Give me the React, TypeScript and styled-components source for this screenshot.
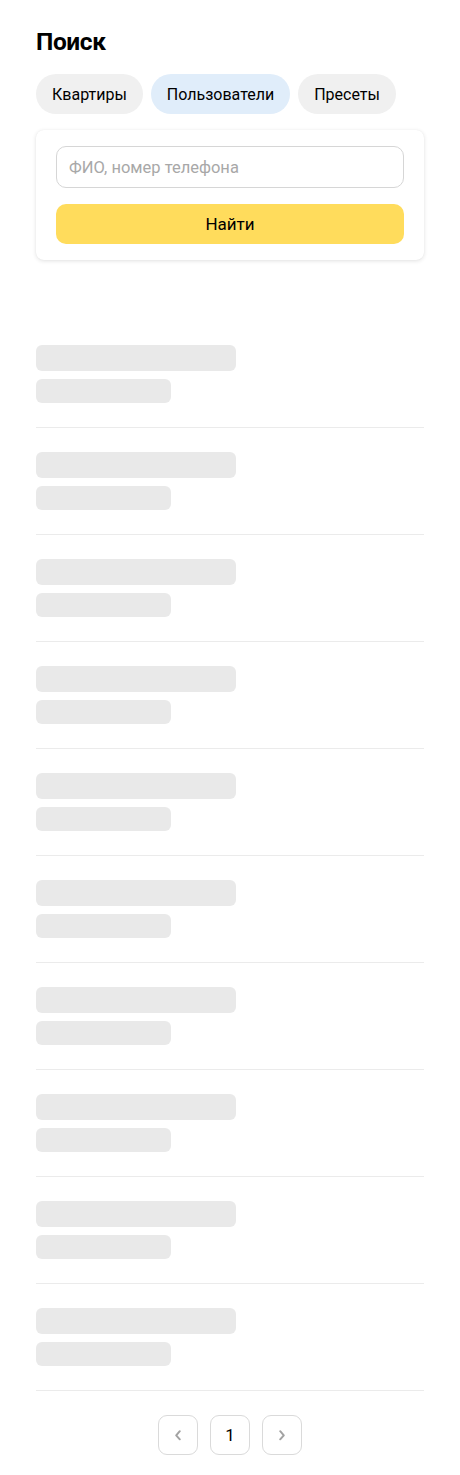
import React from "react";
import styled, { createGlobalStyle } from "styled-components";

const Global = createGlobalStyle`
  html, body { margin: 0; padding: 0; background: #fff; }
  body { font-family: Roboto, "Noto Sans", Arial, sans-serif; color: #000; }
  * { box-sizing: border-box; }
`;

const Page = styled.div`
  width: 460px;
  padding: 24px 36px 20px;
  display: flex;
  flex-direction: column;
`;

const Title = styled.h1`
  margin: 0;
  font-size: 24.5px;
  line-height: 36px;
  font-weight: 700;
  letter-spacing: -0.4px;
`;

const Tabs = styled.div`
  display: flex;
  gap: 8px;
  margin-top: 14px;
`;

const Tab = styled.button<{ $active?: boolean }>`
  height: 40px;
  padding: 0 16px;
  border: none;
  border-radius: 20px;
  background: ${(p) => (p.$active ? "#e0edfa" : "#f0f0f0")};
  font-family: inherit;
  font-size: 16px;
  color: #000;
  cursor: pointer;
`;

const Card = styled.div`
  margin-top: 16px;
  background: #fff;
  border-radius: 8px;
  box-shadow: 0 1px 4px rgba(0, 0, 0, 0.12), 0 0 1px rgba(0, 0, 0, 0.06);
  padding: 16px 20px;
  display: flex;
  flex-direction: column;
  gap: 16px;
`;

const Input = styled.input`
  height: 42px;
  border: 1px solid #d6d6d6;
  border-radius: 10px;
  padding: 0 12px;
  font-family: inherit;
  font-size: 16.5px;
  outline: none;
  &::placeholder { color: #a8a8a8; }
`;

const SearchButton = styled.button`
  height: 40px;
  border: none;
  border-radius: 10px;
  background: #ffdc5c;
  font-family: inherit;
  font-size: 17px;
  color: #000;
`;

const List = styled.div`
  margin-top: 61px;
  display: flex;
  flex-direction: column;
`;

const Item = styled.div`
  padding: 24px 0;
  border-bottom: 1px solid #ebebeb;
  display: flex;
  flex-direction: column;
  gap: 8px;
`;

const Skeleton = styled.div<{ $w: number; $h: number }>`
  width: ${(p) => p.$w}px;
  height: ${(p) => p.$h}px;
  border-radius: 6px;
  background: #e9e9e9;
`;

const Pager = styled.div`
  display: flex;
  justify-content: center;
  gap: 12px;
  margin-top: 24px;
`;

const PageButton = styled.button`
  width: 40px;
  height: 40px;
  border: 1px solid #dadada;
  border-radius: 9px;
  background: #fff;
  display: flex;
  align-items: center;
  justify-content: center;
  font-family: inherit;
  font-size: 17px;
  color: #000;
  padding: 0;
`;

const Chevron = ({ dir }: { dir: "left" | "right" }) => (
  <svg width="14" height="14" viewBox="0 0 14 14" fill="none">
    <path
      d={dir === "left" ? "M8.8 3.2L5.2 7.3l3.6 4" : "M5.2 3.2L8.8 7.3l-3.6 4"}
      stroke="#a3a3a3"
      strokeWidth="2"
      strokeLinecap="round"
      strokeLinejoin="round"
    />
  </svg>
);

export default function App() {
  return (
    <>
      <Global />
      <Page>
        <Title>Поиск</Title>
        <Tabs>
          <Tab>Квартиры</Tab>
          <Tab $active>Пользователи</Tab>
          <Tab>Пресеты</Tab>
        </Tabs>
        <Card>
          <Input placeholder="ФИО, номер телефона" />
          <SearchButton>Найти</SearchButton>
        </Card>
        <List>
          {Array.from({ length: 10 }).map((_, i) => (
            <Item key={i}>
              <Skeleton $w={200} $h={26} />
              <Skeleton $w={135} $h={24} />
            </Item>
          ))}
        </List>
        <Pager>
          <PageButton aria-label="Назад"><Chevron dir="left" /></PageButton>
          <PageButton>1</PageButton>
          <PageButton aria-label="Вперёд"><Chevron dir="right" /></PageButton>
        </Pager>
      </Page>
    </>
  );
}
